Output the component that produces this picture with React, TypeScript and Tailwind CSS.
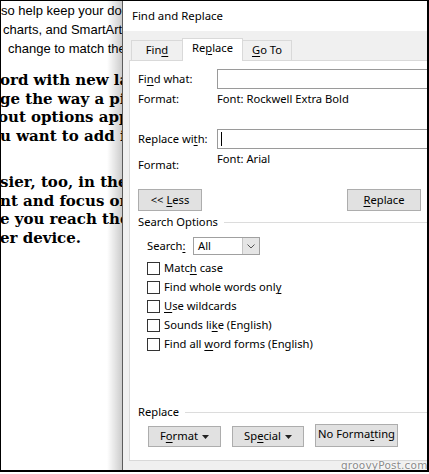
import React from "react";

const U = ({ children }: { children: React.ReactNode }) => (
  <span className="underline decoration-1 underline-offset-[2px]">{children}</span>
);

const Btn = ({
  children,
  className = "",
}: {
  children: React.ReactNode;
  className?: string;
}) => (
  <div
    className={
      "flex items-center justify-center bg-[#e1e1e1] border border-[#adadad] text-black whitespace-nowrap " +
      className
    }
  >
    {children}
  </div>
);

const Caret = () => (
  <svg width="7" height="4" viewBox="0 0 7 4" className="ml-[4px] mt-[1px]">
    <path d="M0 0 L7 0 L3.5 4 Z" fill="#222" />
  </svg>
);

const Check = ({ children }: { children: React.ReactNode }) => (
  <div className="flex items-center h-[19px]">
    <div className="w-[13px] h-[13px] border border-[#333] bg-white mr-[4px] shrink-0" />
    <span className="whitespace-nowrap">{children}</span>
  </div>
);

export default function App() {
  return (
    <div className="w-[429px] h-[474px] bg-white">
      <div className="relative w-[429px] h-[472px] border-t border-l border-r-2 border-b-2 border-black flex overflow-hidden bg-white">
        {/* document */}
        <div className="w-[121px] shrink-0 overflow-hidden text-black">
          <div className="font-['Liberation_Sans',Arial,sans-serif] text-[13px] leading-[19px] whitespace-nowrap">
            <div>so help keep your document</div>
            <div className="ml-[2px]">charts, and SmartArt also</div>
            <div className="ml-[7px]">change to match the new</div>
          </div>
          <div className="mt-[13px] font-['DejaVu_Serif',serif] font-black text-[15px] leading-[18.5px] whitespace-nowrap">
            <div className="-ml-[1px]">ord with new layout</div>
            <div className="-ml-[1px]">ge the way a picture</div>
            <div className="-ml-[3px]">out options appear</div>
            <div className="-ml-[1px]">u want to add it</div>
          </div>
          <div className="mt-[28px] font-['DejaVu_Serif',serif] font-black text-[15px] leading-[18.5px] whitespace-nowrap">
            <div className="-ml-[1px]">sier, too, in the new</div>
            <div className="-ml-[1px]">nt and focus on the</div>
            <div className="-ml-[1px]">e you reach the end</div>
            <div className="-ml-[1px]">er device.</div>
          </div>
        </div>

        {/* dialog shadow */}
        <div className="absolute top-0 bottom-0 left-[106px] w-[15px] bg-linear-to-r from-transparent to-black/20 pointer-events-none" />

        {/* dialog */}
        <div className="flex-1 min-w-0 flex flex-col bg-[#f0f0f0] border-l border-[#5c5c5c] overflow-hidden font-['Noto_Sans',sans-serif] text-[11.2px] text-black">
          <div className="h-[30px] shrink-0 bg-white flex items-center pl-[9px] text-[11.4px]">
            Find and Replace
          </div>
          <div className="pl-[6px] pt-[7px]">
            <div className="relative z-10 flex items-end h-[22px] ml-[2px]">
              <div className="w-[51px] h-[20px] flex items-center justify-center border-t border-l border-[#d9d9d9] bg-[#f0f0f0]">
                <span>Fin<U>d</U></span>
              </div>
              <div className="w-[61px] h-[23px] -mb-px flex items-center justify-center border-t border-l border-r border-[#d9d9d9] bg-white pb-[3px]">
                <span>Re<U>p</U>lace</span>
              </div>
              <div className="w-[49px] h-[20px] flex items-center justify-center border-t border-r border-[#d9d9d9] bg-[#f0f0f0]">
                <span><U>G</U>o To</span>
              </div>
            </div>
            <div className="w-[330px] h-[401px] bg-white border border-[#d9d9d9] pl-[8px] pt-[8px] flex flex-col">
              <div className="flex items-center h-[20px]">
                <div className="w-[79px] shrink-0">
                  Fi<U>n</U>d what:
                </div>
                <div className="flex-1 h-[20px] border border-[#9a9a9a] bg-white" />
              </div>
              <div className="flex items-center h-[20px]">
                <div className="w-[79px] shrink-0">Format:</div>
                <div>Font: Rockwell Extra Bold</div>
              </div>
              <div className="flex items-center h-[20px] mt-[20px]">
                <div className="w-[79px] shrink-0">
                  Replace wi<U>t</U>h:
                </div>
                <div className="flex-1 h-[20px] border border-[#9a9a9a] bg-white flex items-center pl-[3px]">
                  <div className="w-px h-[14px] bg-black" />
                </div>
              </div>
              <div className="flex items-start h-[26px]">
                <div className="w-[79px] shrink-0 mt-[6px] leading-[20px]">Format:</div>
                <div className="leading-[20px]">Font: Arial</div>
              </div>
              <div className="flex mt-[14px]">
                <Btn className="w-[64px] h-[22px]">
                  <span>&lt;&lt; <U>L</U>ess</span>
                </Btn>
                <Btn className="w-[74px] h-[22px] ml-[145px]">
                  <span><U>R</U>eplace</span>
                </Btn>
              </div>
              <div className="flex items-center h-[16px] mt-[3px]">
                <span>Search Options</span>
                <div className="flex-1 h-px bg-[#dcdcdc] ml-[6px]" />
              </div>
              <div className="pl-[9px] mt-[7px] flex flex-col">
                <div className="flex items-center h-[18px]">
                  <div className="w-[46px] shrink-0">
                    Search<U>:</U>
                  </div>
                  <div className="w-[67px] h-[18px] border border-[#a0a0a0] bg-white flex">
                    <div className="flex-1 flex items-center pl-[4px]">All</div>
                    <div className="w-[17px] h-full bg-[#e5e5e5] border-l border-[#c4c4c4] flex items-center justify-center">
                      <svg width="8" height="5" viewBox="0 0 8 5">
                        <path d="M0.5 0.5 L4 4 L7.5 0.5" fill="none" stroke="#555" strokeWidth="1" />
                      </svg>
                    </div>
                  </div>
                </div>
                <div className="mt-[4px] flex flex-col">
                  <Check>
                    Matc<U>h</U> case
                  </Check>
                  <Check>
                    Find whole words onl<U>y</U>
                  </Check>
                  <Check>
                    <U>U</U>se wildcards
                  </Check>
                  <Check>
                    Sounds li<U>k</U>e (English)
                  </Check>
                  <Check>
                    Find all <U>w</U>ord forms (English)
                  </Check>
                </div>
              </div>
              <div className="flex items-center h-[16px] mt-[50px]">
                <span>Replace</span>
                <div className="flex-1 h-px bg-[#dcdcdc] ml-[6px]" />
              </div>
              <div className="flex items-end mt-[4px] ml-[10px]">
                <Btn className="w-[73px] h-[21px]">
                  <span>F<U>o</U>rmat</span>
                  <Caret />
                </Btn>
                <Btn className="w-[72px] h-[21px] ml-[11px]">
                  <span>Sp<U>e</U>cial</span>
                  <Caret />
                </Btn>
                <Btn className="w-[83px] h-[23px] ml-[11px] pb-[2px]">
                  <span>No Forma<U>t</U>ting</span>
                </Btn>
              </div>
            </div>
          </div>
        </div>

        {/* watermark */}
        <div
          className="absolute left-[340px] top-[457px] font-['DejaVu_Sans',sans-serif] text-[10.5px] leading-[14px] text-[#8a8a8a] tracking-[0.2px]"
          style={{ textShadow: "0 0 2px #fff, 0 0 2px #fff, 0 0 1px #fff" }}
        >
          groovyPost.com
        </div>
      </div>
    </div>
  );
}
